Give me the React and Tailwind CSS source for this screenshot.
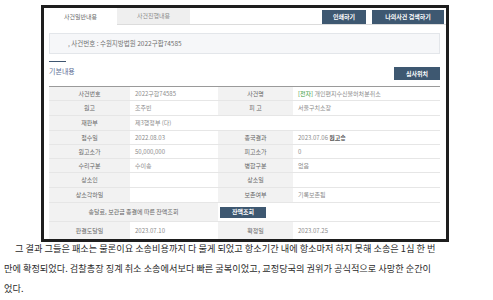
import React from 'react';

function Label({ children, className = '' }) {
    return (
        <div className={`flex items-center justify-center bg-[#f2f2f2] text-[#666] ${className}`}>
            {children}
        </div>
    );
}

function Value({ children, className = '' }) {
    return (
        <div className={`flex items-center pl-[5px] text-[#8c8c8c] ${className}`}>
            {children}
        </div>
    );
}

function Row({ h, children }) {
    return <div className={`flex border-b border-[#e6e6e6] ${h}`}>{children}</div>;
}

export default function App() {
    return (
        <div className="w-[493px] h-[300px] bg-white overflow-hidden font-['Noto_Sans_CJK_KR',sans-serif] pt-[5px]">
            {/* captured page */}
            <div className="ml-[41px] w-[408px] h-[237px] border-[3px] border-[#1e1e1e] bg-white text-[6px] leading-none">
                <div className="flex h-[17px]">
                    <div className="w-[73px] flex items-center justify-center text-[#666]">사건일반내용</div>
                    <div className="w-[73px] flex items-center justify-center bg-[#efefef] border-b border-[#dcdcdc] text-[#8a8a8a]">
                        사건진행내용
                    </div>
                    <div className="flex-1 flex justify-end items-end gap-[6px] pr-[2px] border-b border-[#dcdcdc]">
                        <button className="w-[44px] h-[14px] bg-[#3e5871] text-white text-[6px] font-semibold">인쇄하기</button>
                        <button className="w-[72px] h-[14px] bg-[#3e5871] text-white text-[6px] font-semibold">나의사건 검색하기</button>
                    </div>
                </div>

                <div className="pl-[5px] pr-[6px]">
                    <div className="mt-[8px] h-[21px] flex items-center pl-[18px] bg-[#f6f7f9] border border-[#e3e6ea] text-[6.5px] text-[#707070]">
                        , 사건번호 : 수원지방법원 2022구합74585
                    </div>

                    <div className="mt-[7px] h-[19px] flex justify-between">
                        <div>
                            <div className="w-[17px] h-px bg-[#3f5570]" />
                            <div className="mt-[5px] text-[7px] leading-[8px] text-[#5d6f96]">기본내용</div>
                        </div>
                        <button className="mt-[6px] w-[46px] h-[13px] bg-[#3e5871] text-white text-[6px] font-semibold">심사위치</button>
                    </div>

                    <div className="mt-[6px] border-t border-[#9a9a9a]">
                        <Row h="h-[14px]">
                            <Label className="w-[81px]">사건번호</Label>
                            <Value className="w-[88px]">2022구합74585</Value>
                            <Label className="w-[75px]">사건명</Label>
                            <Value className="flex-1">
                                <span className="text-[#3a9a3a]">[전자]</span>&nbsp;개인편지수신불허처분취소
                            </Value>
                        </Row>
                        <Row h="h-[15px]">
                            <Label className="w-[81px]">원고</Label>
                            <Value className="w-[88px]">조주빈</Value>
                            <Label className="w-[75px]">피 고</Label>
                            <Value className="flex-1">서울구치소장</Value>
                        </Row>
                        <Row h="h-[15px]">
                            <Label className="w-[81px]">재판부</Label>
                            <Value className="flex-1">제3행정부 (다)</Value>
                        </Row>
                        <Row h="h-[14px]">
                            <Label className="w-[81px]">접수일</Label>
                            <Value className="w-[88px]">2022.08.03</Value>
                            <Label className="w-[75px]">종국결과</Label>
                            <Value className="flex-1">
                                2023.07.06&nbsp;<span className="text-[#555] font-semibold">원고승</span>
                            </Value>
                        </Row>
                        <Row h="h-[14px]">
                            <Label className="w-[81px]">원고소가</Label>
                            <Value className="w-[88px]">50,000,000</Value>
                            <Label className="w-[75px]">피고소가</Label>
                            <Value className="flex-1">0</Value>
                        </Row>
                        <Row h="h-[14px]">
                            <Label className="w-[81px]">수리구분</Label>
                            <Value className="w-[88px]">수이송</Value>
                            <Label className="w-[75px]">병합구분</Label>
                            <Value className="flex-1">없음</Value>
                        </Row>
                        <Row h="h-[15px]">
                            <Label className="w-[81px]">상소인</Label>
                            <Value className="w-[88px]" />
                            <Label className="w-[75px]">상소일</Label>
                            <Value className="flex-1" />
                        </Row>
                        <Row h="h-[15px]">
                            <Label className="w-[81px]">상소각하일</Label>
                            <Value className="w-[88px]" />
                            <Label className="w-[75px]">보존여부</Label>
                            <Value className="flex-1">기록보존됨</Value>
                        </Row>
                        <Row h="h-[19px]">
                            <Label className="w-[169px]">송달료, 보관금 종결에 따른 잔액조회</Label>
                            <div className="flex-1 flex items-center pl-[2px]">
                                <button className="w-[46px] h-[11px] bg-[#3e5871] text-white text-[6px] font-semibold">잔액조회</button>
                            </div>
                        </Row>
                        <div className="flex h-[17px]">
                            <Label className="w-[81px]">판결도달일</Label>
                            <Value className="w-[88px]">2023.07.10</Value>
                            <Label className="w-[75px]">확정일</Label>
                            <Value className="flex-1">2023.07.25</Value>
                        </div>
                    </div>
                </div>
            </div>

            {/* article text */}
            <div className="pl-[4px] text-[9.2px] text-[#2a2a2a] whitespace-nowrap">
                <div className="leading-[12px] pl-[11px]">
                    그 결과 그들은 패소는 물론이요 소송비용까지 다 물게 되었고 항소기간 내에 항소마저 하지 못해 소송은 1심 한 번
                </div>
                <div className="mt-[4px] leading-[20px]">
                    만에 확정되었다. 검찰총장 징계 취소 소송에서보다 빠른 굴복이었고, 교정당국의 권위가 공식적으로 사망한 순간이
                </div>
                <div className="leading-[20px]">었다.</div>
            </div>
        </div>
    );
}
